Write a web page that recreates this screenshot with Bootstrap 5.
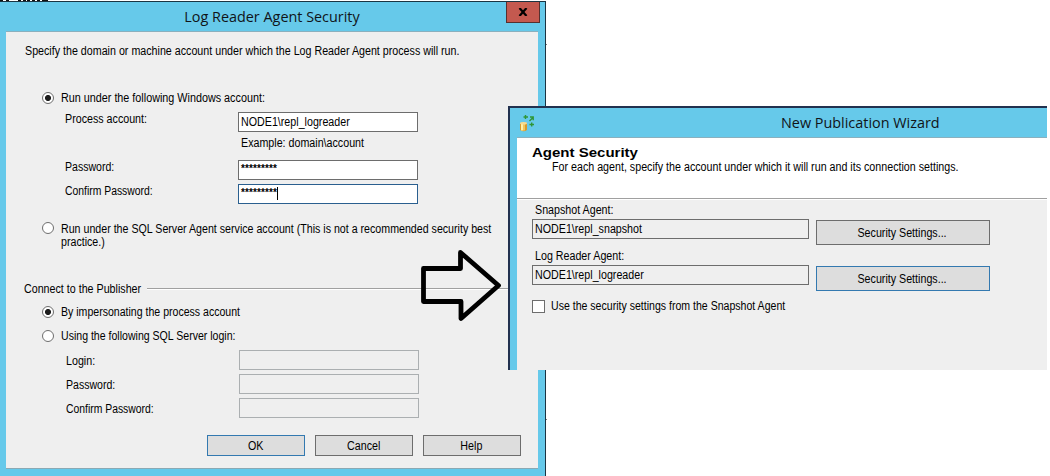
<!DOCTYPE html>
<html lang="en">
<head>
<meta charset="utf-8">
<meta name="viewport" content="width=device-width, initial-scale=1">
<title>Replication security</title>
<link href="https://cdn.jsdelivr.net/npm/bootstrap@5.3.0/dist/css/bootstrap.min.css" rel="stylesheet">
<style>
  body { width: 1050px; height: 476px; background: #fff; color: #000; font: 12px/14px "Liberation Sans", Arial, sans-serif; }
  .desk { width: 1047px; height: 476px; }
  /* condensed dialog lettering */
  .n { display: inline-block; transform: scaleX(.891); transform-origin: 0 0; }
  .n.tight { transform: scaleX(.88); }
  .n.tighter { transform: scaleX(.865); }
  .cmd .n { transform-origin: 50% 0; }
  .win { background: #66c9ea; }
  .win-log { left: 0; top: 1px; width: 546px; height: 475px; border-top: 1px solid #1b3442; border-right: 1px solid #1b3442; padding: 0 7px 7px 6px; }
  .win-wiz { left: 508px; top: 106px; width: 539px; height: 264px; border-top: 2px solid #22314f; border-left: 2px solid #22314f; padding-left: 7px; }
  .bar { height: 29px; font: 14.4px/29px "Open Sans", sans-serif; color: #101418; }
  .bar-wiz { padding-left: 3px; }
  .bar-wiz .name { margin-left: 245px; }
  .close-box { right: -2px; top: 0; width: 34px; height: 21px; background: #c4594f; border: 1px solid #56302f; border-top: 0; }
  .pane { background: #efefef; border-top: 1px solid #8ab0be; }
  .pane-log { height: 438px; border-bottom: 1px solid #8aa9b4; padding: 12px 17px 0 18px; }
  .pane-log > .intro { height: 14px; padding-left: 1px; }
  .opt { padding-left: 18px; gap: 7px; }
  .opt-1 { margin-top: 33px; }
  .opt-1 .n { transform: scaleX(.899); }
  .opt-2 { margin-top: 18px; height: 26px; line-height: 13px; }
  .opt-2 .n { padding-top: 1px; transform: scaleX(.887); }
  .opt-3 { margin-top: 9px; }
  .opt-4 { margin-top: 10px; }
  .dot { width: 12px; height: 12px; border: 1px solid #6e6e6e; border-radius: 50%; background: #fff; flex: none; }
  .dot.on { background: radial-gradient(circle, #1c1c1c 0 2.7px, #fff 3.3px); }
  .grid-a, .grid-b { display: grid; grid-template-columns: 173px 180px; margin: 7px 0 0 41px; }
  .grid-b { margin-left: 42px; row-gap: 4px; align-items: center; }
  .grid-b .n { padding-top: 2px; }
  .grid-a { grid-template-rows: 20px 28px 24px 20px; }
  .hint { padding: 4px 0 0 3px; }
  .field { height: 20px; border: 1px solid #6d6d6d; background: #fff; padding: 2px 2px 0; }
  .field.off { border-color: #abafb1; background: #efefef; }
  .field.cur { border-color: #2a5f8f; }
  .pw { font: 700 10px/11px "Liberation Sans", sans-serif; letter-spacing: .11px; }
  .caret { width: 1px; height: 13px; background: #000; }
  .group-title { margin-top: 34px; }
  .group-title .n { margin-right: -8px; }
  .rule { height: 2px; background: #a0a0a0; border-bottom: 1px solid #fff; }
  .cmds { margin-top: 17px; gap: 10px; }
  .cmd, .cmd:hover { background: #dddddd; border: 1px solid #6d6d6d; border-radius: 0; padding: 0 1px 0 0; color: #000; font: inherit; height: 21px; width: 98px; }
  .cmd.def { border-color: #3379b0; }
  .cmd.wide { width: 174px; height: 25px; margin-top: 17px; }
  .head { height: 61px; background: #fff; border-bottom: 1px solid #a0a0a0; padding: 8px 0 0 15px; }
  .head .sub { padding-left: 20px; }
  .big { font: 700 13px/14px "Liberation Sans", sans-serif; transform: scaleX(1.155); transform-origin: 0 0; }
  .body-wiz { height: 171px; padding: 3px 0 0 15px; border-top: 1px solid #fff; }
  .agent { gap: 7px; margin-bottom: 4px; }
  .agent .cap { height: 16px; padding-left: 3px; }
  .field.ro { width: 277px; background: #efefef; }
  .chk { width: 13px; height: 13px; border: 1px solid #6d6d6d; background: #fff; }
  .use { gap: 6px; margin-top: 8px; }
  .arrow { left: 418px; top: 246px; }
</style>
</head>
<body class="overflow-hidden m-0">
<main class="desk position-relative overflow-hidden">
  <svg class="position-absolute top-0 start-0" width="550" height="476" aria-hidden="true">
    <path d="M0 0h3v1H0zM6 0h3v2H6zM18 0h3v1h-3zM23 0h3v1h-3zM27 0h3v1h-3zM32 0h3v1h-3zM37 0h3v1h-3zM42 0h6v1h-6z" fill="#111"/>
    <path d="M546 44.500h1M546 419.500h1" stroke="#777"/>
  </svg>

  <section class="win win-log position-absolute">
    <div class="bar text-center position-relative">
      <span>Log Reader Agent Security</span>
      <div class="close-box position-absolute d-flex align-items-center justify-content-center">
        <svg width="10" height="8" viewBox="0 0 10 8"><path d="M1.500 0 8.500 8M8.500 0 1.500 8" stroke="#000" stroke-width="2.200"/></svg>
      </div>
    </div>
    <div class="pane pane-log text-nowrap">
      <div class="intro"><span class="n">Specify the domain or machine account under which the Log Reader Agent process will run.</span></div>

      <div class="opt opt-1 d-flex align-items-center"><i class="dot on"></i><span class="n">Run under the following Windows account:</span></div>
      <div class="grid-a">
        <span class="n">Process account:</span><div class="field"><span class="n">NODE1\repl_logreader</span></div>
        <span></span><div class="hint"><span class="n">Example: domain\account</span></div>
        <span class="n tight">Password:</span><div class="field"><span class="pw d-block">*********</span></div>
        <span class="n tighter">Confirm Password:</span><div class="field cur d-flex"><span class="pw">*********</span><i class="caret"></i></div>
      </div>

      <div class="opt opt-2 d-flex align-items-start"><i class="dot"></i><span class="n">Run under the SQL Server Agent service account (This is not a recommended security best<br>practice.)</span></div>

      <div class="group-title d-flex align-items-center"><span class="n">Connect to the Publisher</span><div class="rule flex-grow-1"></div></div>
      <div class="opt opt-3 d-flex align-items-center"><i class="dot on"></i><span class="n tight">By impersonating the process account</span></div>
      <div class="opt opt-4 d-flex align-items-center"><i class="dot"></i><span class="n tight">Using the following SQL Server login:</span></div>
      <div class="grid-b">
        <span class="n">Login:</span><div class="field off"></div>
        <span class="n tight">Password:</span><div class="field off"></div>
        <span class="n tighter">Confirm Password:</span><div class="field off"></div>
      </div>

      <div class="cmds d-flex justify-content-end">
        <button class="btn cmd def"><span class="n">OK</span></button>
        <button class="btn cmd"><span class="n">Cancel</span></button>
        <button class="btn cmd"><span class="n">Help</span></button>
      </div>
    </div>
  </section>

  <section class="win win-wiz position-absolute text-nowrap">
    <div class="bar bar-wiz d-flex align-items-center">
      <svg width="16" height="18" viewBox="0 0 16 18">
        <path d="M0 9.500Q3.500 7 7 9.500V16Q3.500 18.500 0 16Z" fill="#d79a2c"/>
        <path d="M1 10h2.500v6.500H1z" fill="#fff0a8"/><path d="M3.500 10H5v6.500H3.500z" fill="#f2c75c"/>
        <ellipse cx="3.500" cy="9.300" rx="3.500" ry="1.200" fill="#f5dc94"/>
        <path d="M3.500 3h4.500M5.500 1v4M9.500 7 13 3.500M10 3h3.200v3.200M9.500 10.500h4.500M11.700 8.500v4" fill="none" stroke="#2f9636" stroke-width="1.400"/>
      </svg>
      <span class="name">New Publication Wizard</span>
    </div>
    <div class="pane">
      <div class="head">
        <div class="big">Agent Security</div>
        <div class="sub"><span class="n">For each agent, specify the account under which it will run and its connection settings.</span></div>
      </div>
      <div class="body-wiz">
        <div class="agent d-flex align-items-start">
          <div><div class="cap"><span class="n">Snapshot Agent:</span></div><div class="field ro"><span class="n">NODE1\repl_snapshot</span></div></div>
          <button class="btn cmd wide"><span class="n">Security Settings...</span></button>
        </div>
        <div class="agent d-flex align-items-start">
          <div><div class="cap"><span class="n">Log Reader Agent:</span></div><div class="field ro"><span class="n">NODE1\repl_logreader</span></div></div>
          <button class="btn cmd wide def"><span class="n">Security Settings...</span></button>
        </div>
        <div class="use d-flex align-items-center"><i class="chk"></i><span class="n tight">Use the security settings from the Snapshot Agent</span></div>
      </div>
    </div>
  </section>

  <svg class="arrow position-absolute" width="86" height="78" viewBox="418 246 86 78" aria-hidden="true">
    <path d="M423.500 268.500H460.500V252.500L498.500 285.500 461 318.500V301.500H423.500Z" fill="none" stroke="#000" stroke-width="4.800" stroke-linejoin="round"/>
  </svg>
</main>
<script src="https://cdn.jsdelivr.net/npm/bootstrap@5.3.0/dist/js/bootstrap.bundle.min.js"></script>
</body>
</html>
